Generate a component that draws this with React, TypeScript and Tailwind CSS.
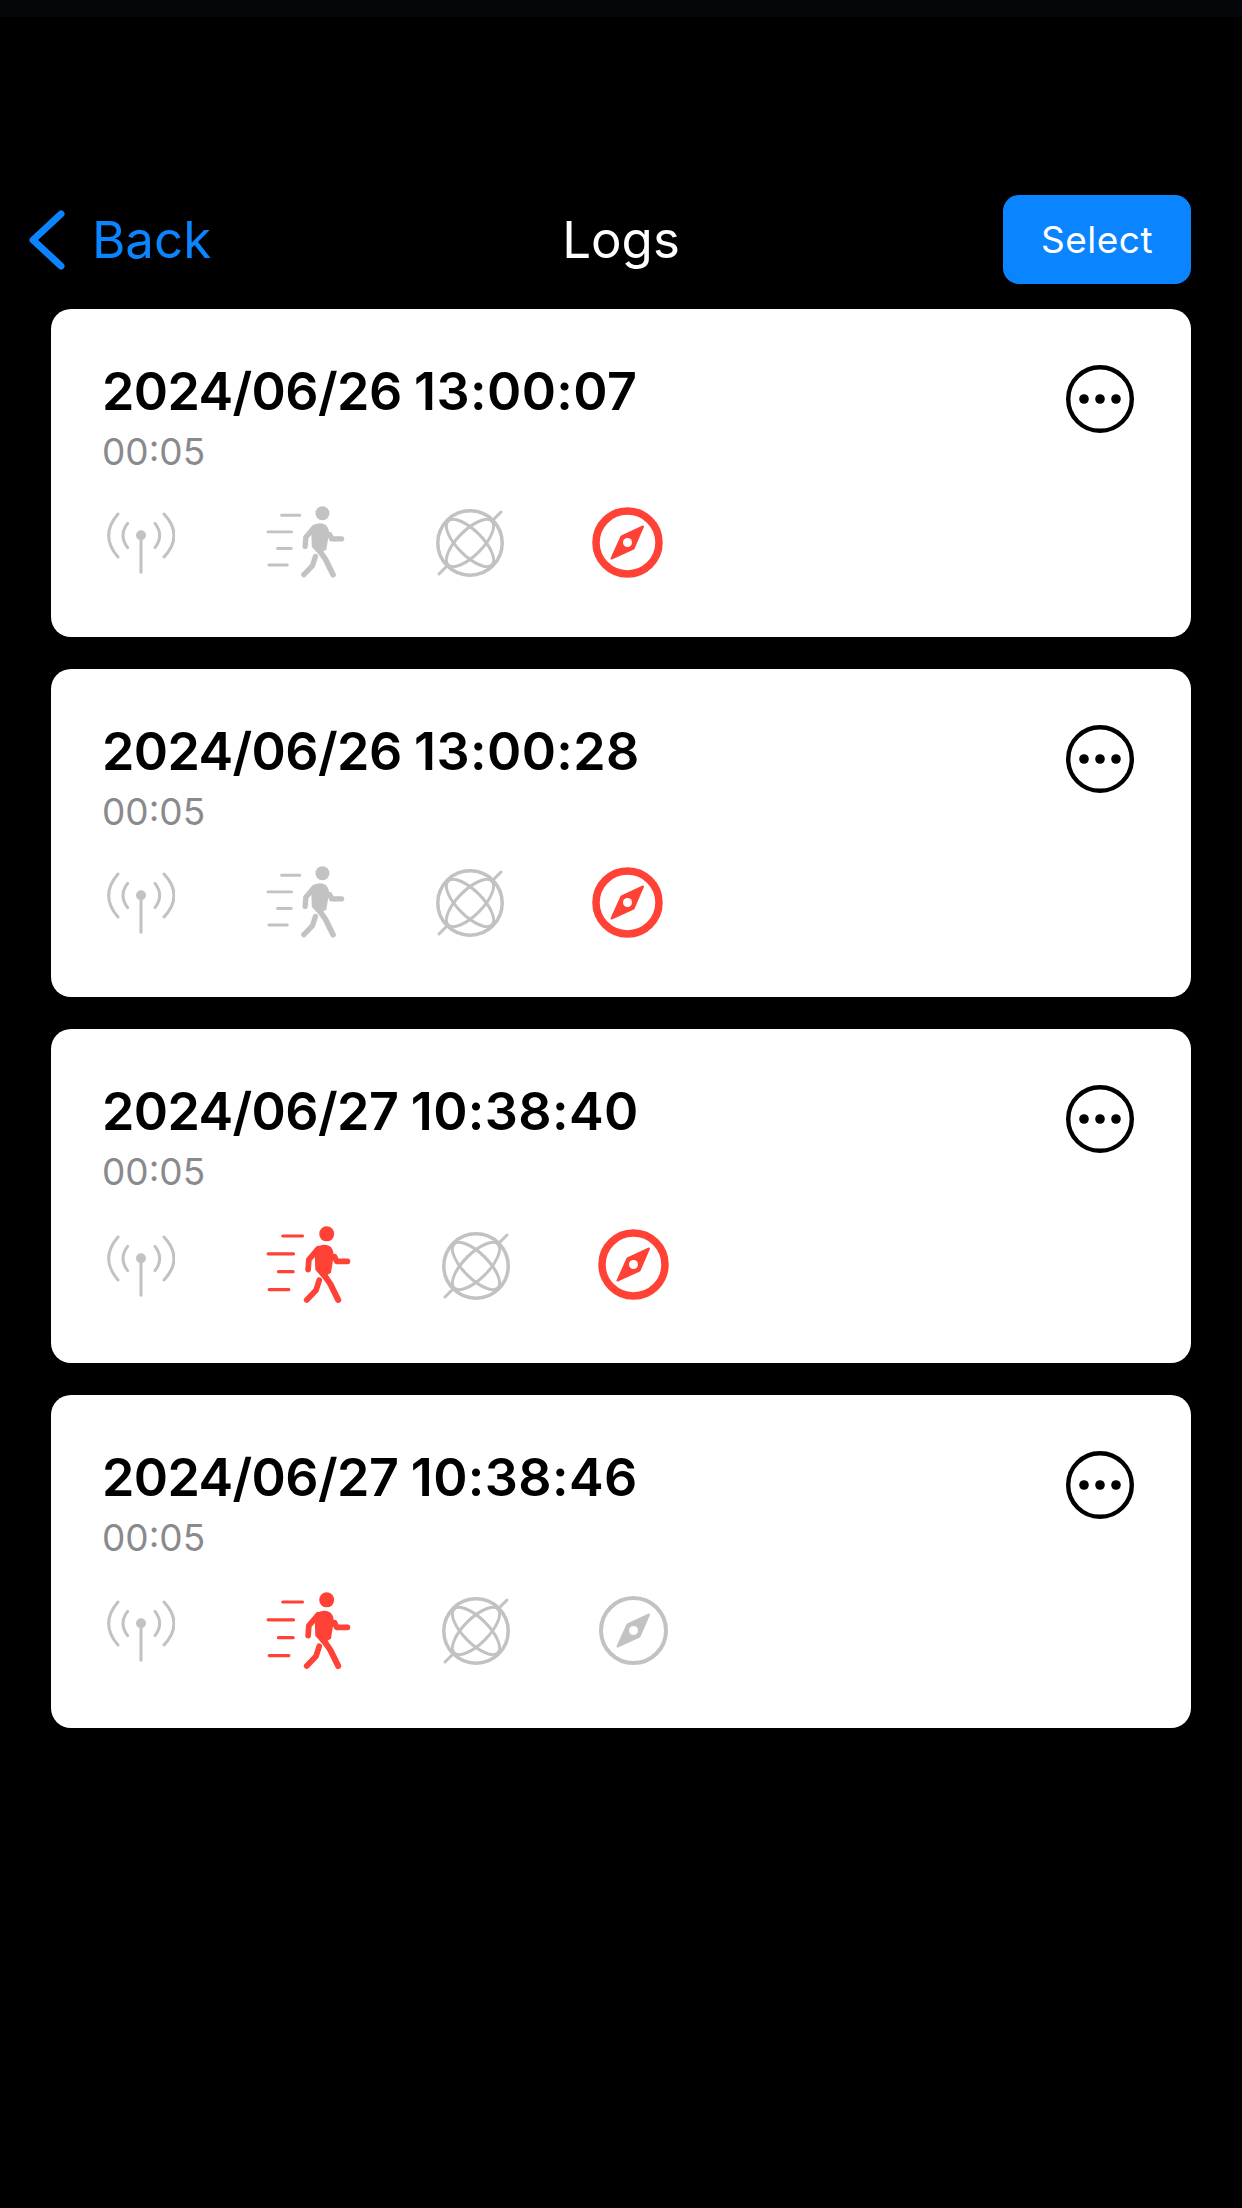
const RED = "#ff4235";
const GRAY = "#c2c2c2";

function Antenna() {
  return (
    <svg width="69" height="63" viewBox="78 64 207 189" fill="none" stroke={GRAY} strokeWidth="9" strokeLinecap="round" className="mt-[1px] shrink-0">
      <path d="M114 73 Q58 137 114 202" />
      <path d="M252 73 Q312 137 252 202" />
      <path d="M143 101 Q115 137 143 174" />
      <path d="M225 101 Q253 137 225 174" />
      <path d="M183 140 V248" />
      <circle cx="183" cy="137" r="15" fill={GRAY} stroke="none" />
    </svg>
  );
}

function Walker({ active }: { active: boolean }) {
  const c = active ? RED : GRAY;
  return (
    <svg
      width={active ? 85 : 79}
      height={active ? 77.5 : 72}
      viewBox="558 48 238 217"
      fill="none"
      stroke={c}
      strokeLinecap="round"
      strokeLinejoin="round"
      className="shrink-0"
    >
      <circle cx="728" cy="70" r="21" fill={c} stroke="none" />
      <path d="M605 76 H660 M564 126 H635 M593 176 H634 M567 226 H622" strokeWidth="9" />
      <path d="M676 170 L678 142 L704 112" strokeWidth="16" />
      <path d="M696 112 Q720 95 738 108 Q748 118 745 135 L738 178 L716 190 L698 170 Z" fill={c} strokeWidth="4" />
      <path d="M716 178 L738 210 L760 255" strokeWidth="17" />
      <path d="M707 200 L698 228 L672 255" strokeWidth="16" />
      <path d="M750 134 L756 147 H786" strokeWidth="16" />
    </svg>
  );
}

function Gyro() {
  return (
    <svg width="70" height="70" viewBox="0 0 70 70" fill="none" stroke={GRAY} strokeWidth="3" strokeLinecap="round" className="mt-[2px] shrink-0">
      <circle cx="35" cy="35" r="32.2" strokeWidth="3.5" />
      <ellipse cx="35" cy="35" rx="31" ry="12.5" transform="rotate(45 35 35)" />
      <ellipse cx="35" cy="35" rx="31" ry="12.5" transform="rotate(-45 35 35)" />
      <path d="M4 66 L12 58 M58 12 L66 4" />
    </svg>
  );
}

function Compass({ active }: { active: boolean }) {
  const c = active ? RED : GRAY;
  return (
    <svg width="71" height="71" viewBox="0 0 71 71" fill="none" className="shrink-0">
      {active ? (
        <circle cx="35.5" cy="35.5" r="31.5" stroke={c} strokeWidth="7.5" />
      ) : (
        <circle cx="35.5" cy="35.5" r="32.5" stroke={c} strokeWidth="4" />
      )}
      <path
        d="M51 19.5 L41.5 41.5 L19.5 51.5 L29.5 29.5 Z"
        fill={c}
        stroke={c}
        strokeWidth="2"
        strokeLinejoin="round"
      />
      <circle cx="35.5" cy="35.5" r="4.5" fill="#fff" />
    </svg>
  );
}

function More() {
  return (
    <svg width="68" height="68" viewBox="0 0 68 68" fill="none" className="shrink-0">
      <circle cx="34" cy="34" r="31.8" stroke="#000" strokeWidth="4.4" />
      <circle cx="18" cy="34" r="4.8" fill="#000" />
      <circle cx="34" cy="34" r="4.8" fill="#000" />
      <circle cx="50" cy="34" r="4.8" fill="#000" />
    </svg>
  );
}

const logs = [
  { date: "2024/06/26", time: "13:00:07", walk: false, compass: true },
  { date: "2024/06/26", time: "13:00:28", walk: false, compass: true },
  { date: "2024/06/27", time: "10:38:40", walk: true, compass: true },
  { date: "2024/06/27", time: "10:38:46", walk: true, compass: false },
];

function LogCard({ date, time, walk, compass }: { date: string; time: string; walk: boolean; compass: boolean }) {
  return (
    <div className="rounded-[20px] bg-white pt-[56px] pr-[57px] pb-[59px] pl-[51px]">
      <div className="flex h-[141px] items-start justify-between">
        <div className="-mt-[4px]">
          <div className="text-[52px] leading-[62px] font-semibold text-black">
            <span className="tracking-[-0.6px]">{date} </span>
            <span className="tracking-[0.4px]">{time}</span>
          </div>
          <div className="mt-[7px] text-[37px] leading-[44px] text-[#8a8a8e]">00:05</div>
        </div>
        <More />
      </div>
      <div className="flex items-center">
        <div className="ml-[4px] w-[160px]">
          <Antenna />
        </div>
        <Walker active={walk} />
        <div className="ml-[90px]">
          <Gyro />
        </div>
        <div className="ml-[87px]">
          <Compass active={compass} />
        </div>
      </div>
    </div>
  );
}

export default function App() {
  return (
    <div className="min-h-[2208px] bg-black [font-family:Inter,'Noto_Sans',sans-serif]">
      <div className="h-[17px] bg-[#05060a]" />
      <div className="mt-[178px] grid grid-cols-[1fr_auto_1fr] items-center px-[51px]">
        <div className="-ml-[23px] flex items-center gap-[27px] text-[51px] text-[#0a84ff]">
          <svg width="37" height="60" viewBox="0 0 37 60" fill="none" stroke="#0a84ff" strokeWidth="7" strokeLinecap="round" strokeLinejoin="round">
            <path d="M33 4 L5 30 L33 56" />
          </svg>
          <span className="mt-[1px]">Back</span>
        </div>
        <div className="mt-[2px] text-[51px] text-white">Logs</div>
        <div className="flex justify-end">
          <div className="flex h-[89px] w-[188px] items-center justify-center rounded-[16px] bg-[#0a84ff] text-[37px] tracking-[0.5px] text-white">
            Select
          </div>
        </div>
      </div>
      <div className="mx-[51px] mt-[25px] flex flex-col gap-[32px]">
        {logs.map((l) => (
          <LogCard key={l.time} date={l.date} time={l.time} walk={l.walk} compass={l.compass} />
        ))}
      </div>
    </div>
  );
}
